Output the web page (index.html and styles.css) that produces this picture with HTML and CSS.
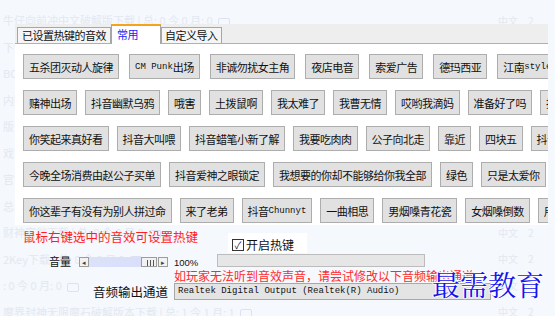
FILE: index.html
```html
<!DOCTYPE html>
<html lang="zh-CN">
<head>
    <meta charset="UTF-8">
    <meta name="viewport" content="width=device-width, initial-scale=1.0">
    <title>音效热键</title>
    <link rel="stylesheet" href="styles.css">
</head>
<body>

<!-- faded download list behind the dialog -->
<div class="site">
    <div class="site-row"><span class="site-title">牛仔向前冲中文破解版下载 | 总: 0 今 0 月: 0 <i class="site-icon"></i></span><span class="site-lang">中文<b>2</b></span></div>
    <div class="site-row"><span class="site-title">下载 | 总: 0 今 0 月: 0 <i class="site-icon"></i></span><span class="site-lang">中文<b>3</b></span></div>
    <div class="site-row"><span class="site-title">BOSS直下载 | 总: 0 今 0 月 0 <i class="site-icon"></i></span><span class="site-lang">中文<b>2</b></span></div>
    <div class="site-row"><span class="site-title">内购破解版下载 | 总: 0 今 0 月 0 <i class="site-icon"></i></span><span class="site-lang">中文<b>2</b></span></div>
    <div class="site-row"><span class="site-title">版 | 植物大战僵尸伏拉无敌变版下载 | 总: 0 今 0 月 0 <i class="site-icon"></i></span><span class="site-lang">中文<b>2</b></span></div>
    <div class="site-row"><span class="site-title">戏下载 | 总: 3 今 3 月 3 <i class="site-icon"></i></span><span class="site-lang">中文<b>3</b></span></div>
    <div class="site-row"><span class="site-title">官方下载 | 总: 0 今 0 月 0 <i class="site-icon"></i></span><span class="site-lang">中文<b>3</b></span></div>
    <div class="site-row"><span class="site-title">总: 0 今 0 月 0 <i class="site-icon"></i></span><span class="site-lang">中文<b>3</b></span></div>
    <div class="site-row"><span class="site-title">财神富翁下载 | 总: 0 今 0 月 0 <i class="site-icon"></i></span><span class="site-lang">中文<b>2</b></span></div>
    <div class="site-row"><span class="site-title">2Key下载 | 总: 0 今 0 月 0 <i class="site-icon"></i></span><span class="site-lang">中文<b>2</b></span></div>
    <div class="site-row"><span class="site-title">: 0 今 0 月: 0 <i class="site-icon"></i></span><span class="site-lang">中文<b>2</b></span></div>
    <div class="site-row"><span class="site-title">魔界封神无限魔石破解版本下载 | 总: 1 今 1 月: 1 <i class="site-icon"></i></span><span class="site-lang">中文<b>2</b></span></div>
</div>

<div class="dialog">
    <div class="tabs">
        <span class="tab">已设置热键的音效</span>
        <span class="tab active">常用</span>
        <span class="tab">自定义导入</span>
    </div>

    <div class="panel">
        <div class="row row-wide">
            <button class="sfx">五杀团灭动人旋律</button>
            <button class="sfx"><span class="latin">CM Punk</span>出场</button>
            <button class="sfx">非诚勿扰女主角</button>
            <button class="sfx">夜店电音</button>
            <button class="sfx">索爱广告</button>
            <button class="sfx">德玛西亚</button>
            <button class="sfx">江南<span class="latin">style</span></button>
        </div>
        <div class="row">
            <button class="sfx">赌神出场</button>
            <button class="sfx">抖音幽默乌鸦</button>
            <button class="sfx">哦害</button>
            <button class="sfx">土拨鼠啊</button>
            <button class="sfx">我太难了</button>
            <button class="sfx">我曹无情</button>
            <button class="sfx">哎哟我滴妈</button>
            <button class="sfx">准备好了吗</button>
            <button class="sfx">抖音</button>
        </div>
        <div class="row">
            <button class="sfx">你笑起来真好看</button>
            <button class="sfx">抖音大叫喂</button>
            <button class="sfx">抖音蜡笔小新了解</button>
            <button class="sfx">我要吃肉肉</button>
            <button class="sfx">公子向北走</button>
            <button class="sfx">靠近</button>
            <button class="sfx">四块五</button>
            <button class="sfx">抖音</button>
        </div>
        <div class="row">
            <button class="sfx">今晚全场消费由赵公子买单</button>
            <button class="sfx">抖音爱神之眼锁定</button>
            <button class="sfx">我想要的你却不能够给你我全部</button>
            <button class="sfx">绿色</button>
            <button class="sfx">只是太爱你</button>
            <button class="sfx">去</button>
        </div>
        <div class="row">
            <button class="sfx">你这辈子有没有为别人拼过命</button>
            <button class="sfx">来了老弟</button>
            <button class="sfx">抖音<span class="latin">Chunnyt</span></button>
            <button class="sfx">一曲相思</button>
            <button class="sfx">男烟嗓青花瓷</button>
            <button class="sfx">女烟嗓倒数</button>
            <button class="sfx">用</button>
        </div>
    </div>

    <div class="hint-row">
        <span class="hint">鼠标右键选中的音效可设置热键</span>
        <label class="hotkey"><span class="check">&#10003;</span>开启热键</label>
    </div>

    <div class="settings">
        <div class="volume-label">
            <span>音量</span>
            <div class="slider">
                <span class="arrow">&#9666;</span>
                <span class="track"><span class="thumb"></span></span>
                <span class="arrow">&#9656;</span>
            </div>
        </div>
        <div class="volume-value">
            <span class="percent">100%</span>
            <div class="meter"></div>
        </div>
        <div class="warn">如玩家无法听到音效声音，请尝试修改以下音频输出通道</div>
        <div class="output-label">音频输出通道</div>
        <div class="select">Realtek Digital Output (Realtek(R) Audio)</div>
    </div>
</div>

<div class="watermark">最需教育</div>

</body>
</html>
```

FILE: styles.css
```css
body {
    margin: 0;
    height: 316px;
    overflow: hidden;
    position: relative;
    background-color: #f5f8fd;
    font-family: "Noto Sans CJK SC", sans-serif;
}

/* background page */
.site {
    padding-top: 7px;
}

.site-row {
    display: flex;
    align-items: center;
    height: 26.5px;
    color: #e3e8f1;
    font-size: 11px;
    white-space: nowrap;
}

.site-title {
    flex: 1;
    padding-left: 3px;
    overflow: hidden;
}

.site-icon {
    display: inline-block;
    width: 10px;
    height: 7px;
    margin-left: 3px;
    border: 1px solid #dbe2f2;
    border-radius: 2px;
    vertical-align: middle;
}

.site-lang {
    width: 57px;
    font-size: 10px;
}

.site-lang b {
    font-weight: normal;
    margin-left: 10px;
}

/* dialog */
.dialog {
    position: absolute;
    left: 15px;
    top: 24px;
    width: 533px;
}

.tabs {
    display: flex;
    align-items: flex-end;
    height: 19px;
    padding-left: 2px;
    background-color: #eeeeee;
    border-bottom: 1px solid #9fb4c9;
}

.tab {
    height: 15px;
    padding: 0 4px;
    border: 1px solid #a6a6a6;
    border-bottom: none;
    background-color: #f5f5f5;
    font-size: 11px;
    letter-spacing: -0.5px;
    line-height: 15px;
    color: #111;
}

.tab.active {
    height: 18px;
    margin-bottom: -1px;
    padding: 0 22px 0 5px;
    border-top: 2px solid #f5a31c;
    background-color: #fff;
    color: #2323f2;
    line-height: 16px;
}

.tab.active + .tab {
    padding: 0 3px;
}

.panel {
    height: 171px;
    padding: 10px 0 0 8px;
    background-color: #fff;
    overflow: hidden;
}

.row {
    display: flex;
    gap: 8px;
    margin-bottom: 11px;
}

.row-wide {
    gap: 10px;
}

.sfx {
    flex-shrink: 0;
    display: inline-flex;
    align-items: center;
    height: 25px;
    margin: 0;
    padding: 0 5px;
    border: 1px solid #adadad;
    border-radius: 0;
    background-color: #e1e1e1;
    color: #111;
    font-family: "Noto Sans CJK SC", sans-serif;
    font-size: 11px;
    letter-spacing: -0.5px;
}

.latin {
    font-family: "Liberation Mono", monospace;
    font-size: 9px;
    letter-spacing: 0;
}

/* lower controls */
.hint-row {
    display: flex;
    align-items: flex-start;
    gap: 30px;
    height: 29px;
}

.hint {
    margin: 5px 0 0 8px;
    color: #ff1e1e;
    font-size: 12.5px;
    line-height: 14px;
}

.hotkey {
    display: flex;
    align-items: center;
    gap: 2px;
    height: 20px;
    margin-top: 8px;
    padding: 3px 13px 0 4px;
    box-sizing: border-box;
    background-color: #fff;
    color: #111;
    font-size: 12px;
}

.check {
    width: 10px;
    height: 10px;
    border: 1px solid #333;
    background-color: #fff;
    font-size: 10px;
    line-height: 10px;
    text-align: center;
    color: #222;
}

.settings {
    display: grid;
    grid-template-columns: 153px 1fr;
    grid-template-rows: 14px 15px 17px;
    column-gap: 6px;
}

.volume-label {
    display: flex;
    align-items: center;
    justify-content: flex-end;
    gap: 8px;
    font-size: 11px;
    color: #111;
}

.slider {
    display: flex;
    width: 89px;
    height: 10px;
    margin-top: 2px;
}

.arrow {
    width: 8px;
    border: 1px solid #9c9c9c;
    background-color: #f2f2f2;
    font-size: 7px;
    line-height: 9px;
    text-align: center;
    color: #444;
}

.track {
    flex: 1;
    display: flex;
    justify-content: flex-end;
    background: linear-gradient(90deg, #dde2fa 0, #d9defa 75%, #f1f1f1 75%);
}

.thumb {
    width: 14px;
    margin-right: 1px;
    border: 1px solid #9c9c9c;
    background: repeating-linear-gradient(90deg, #f2f2f2 0, #f2f2f2 2px, #555 2px, #555 3px);
    background-size: 9px 6px;
    background-position: 3px 2px;
    background-repeat: no-repeat;
    background-color: #f2f2f2;
}

.volume-value {
    display: flex;
    align-items: flex-start;
    gap: 19px;
}

.percent {
    margin-top: 4px;
    font-family: "Liberation Sans", sans-serif;
    font-size: 9.5px;
    line-height: 10px;
    color: #111;
}

.meter {
    width: 206px;
    height: 11px;
    border: 1px solid #bcbcbc;
    background-color: #e6e6e6;
}

.warn {
    grid-column: 2;
    color: #ff2a2a;
    font-size: 12px;
    line-height: 15px;
    white-space: nowrap;
}

.output-label {
    grid-column: 1;
    text-align: right;
    font-size: 12.5px;
    line-height: 17px;
    color: #111;
}

.select {
    width: 312px;
    height: 15px;
    padding-left: 3px;
    border: 1px solid #a8a8a8;
    background-color: #e4e4e4;
    font-family: "Liberation Mono", monospace;
    font-size: 9px;
    line-height: 15px;
    color: #111;
    white-space: nowrap;
}

.watermark {
    position: absolute;
    left: 432px;
    top: 269px;
    font-family: "Noto Serif CJK SC", "Noto Sans CJK SC", serif;
    font-size: 28px;
    line-height: 30px;
    color: #1414ee;
    text-shadow: 1px 0 #fff, -1px 0 #fff, 0 1px #fff, 0 -1px #fff;
}
```
